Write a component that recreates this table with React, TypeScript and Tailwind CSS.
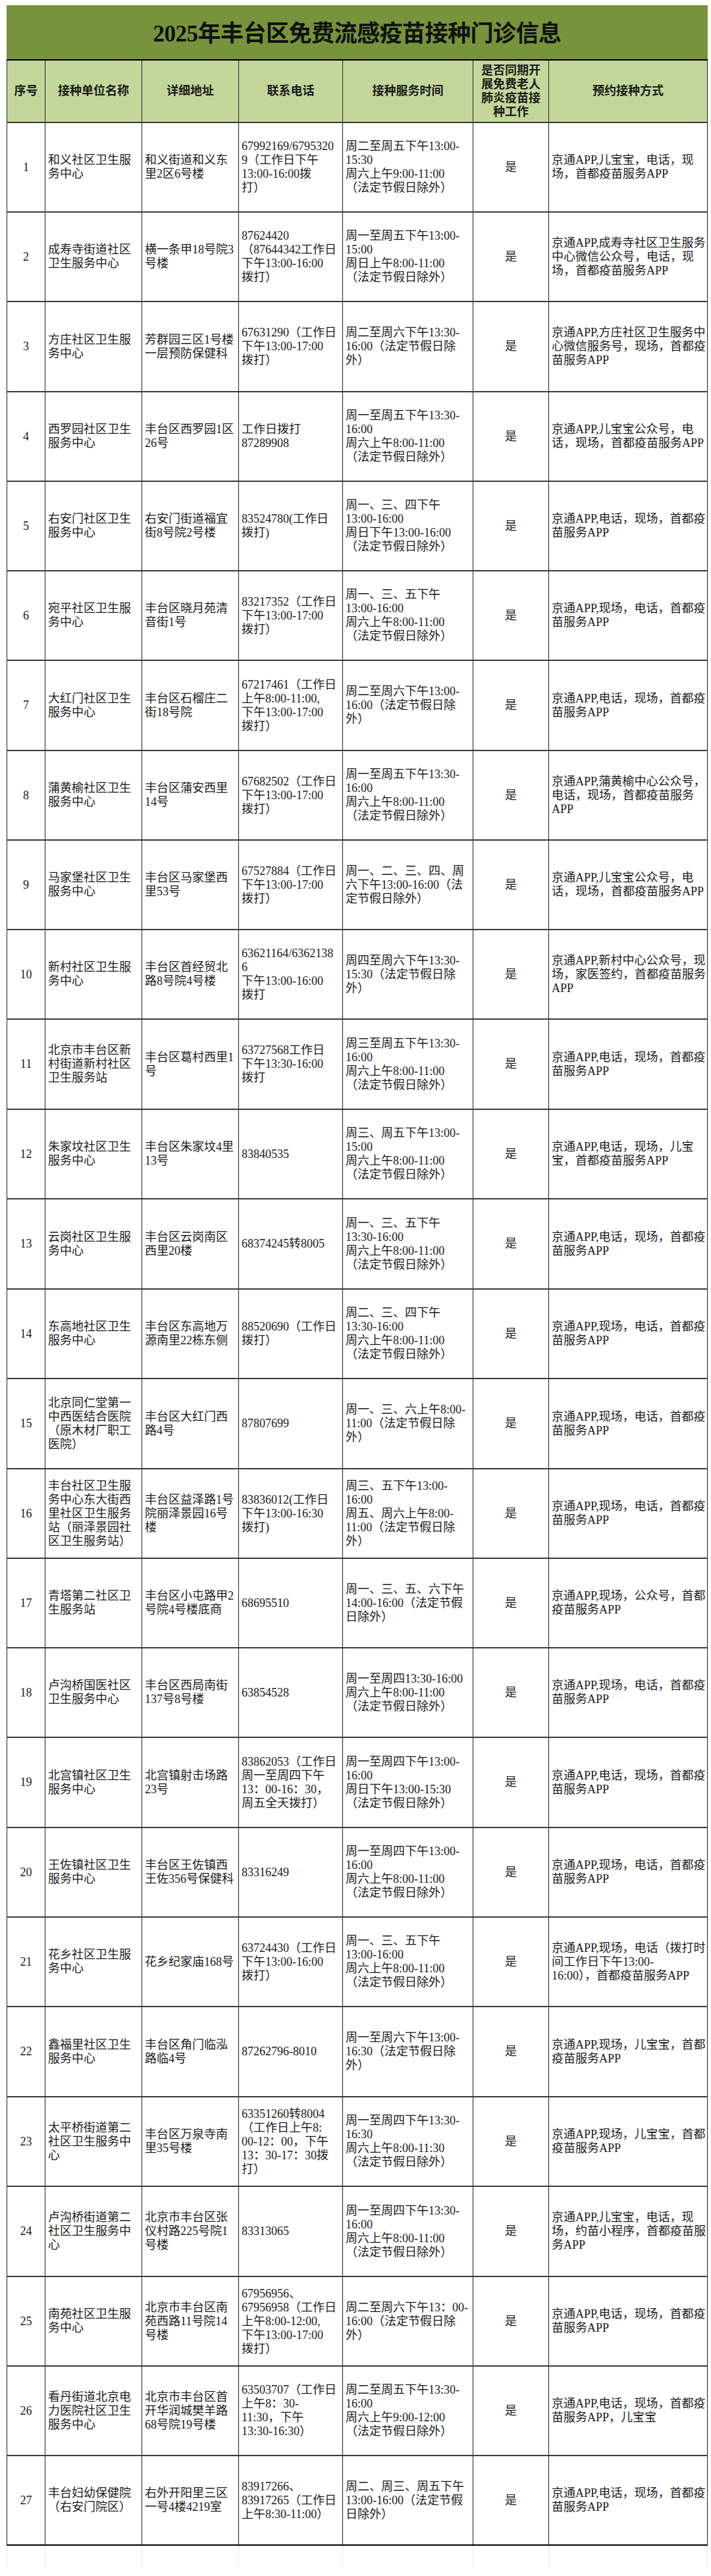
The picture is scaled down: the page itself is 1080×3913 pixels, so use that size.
type Row = {
  name: string;
  addr: string;
  phone: string;
  time: string;
  method: string;
  tall?: boolean;
};

const rows: Row[] = [
  {
    name: "和义社区卫生服\n务中心",
    addr: "和义街道和义东\n里2区6号楼",
    phone: "67992169/6795320\n9（工作日下午\n13:00-16:00拨\n打）",
    time: "周二至周五下午13:00-\n15:30\n周六上午9:00-11:00\n（法定节假日除外）",
    method: "京通APP,儿宝宝，电话，现\n场，首都疫苗服务APP",
  },
  {
    name: "成寿寺街道社区\n卫生服务中心",
    addr: "横一条甲18号院3\n号楼",
    phone: "87624420\n（87644342工作日\n下午13:00-16:00\n拨打）",
    time: "周一至周五下午13:00-\n15:00\n周日上午8:00-11:00\n（法定节假日除外）",
    method: "京通APP,成寿寺社区卫生服务\n中心微信公众号，电话，现\n场，首都疫苗服务APP",
  },
  {
    name: "方庄社区卫生服\n务中心",
    addr: "芳群园三区1号楼\n一层预防保健科",
    phone: "67631290（工作日\n下午13:00-17:00\n拨打）",
    time: "周二至周六下午13:30-\n16:00（法定节假日除\n外）",
    method: "京通APP,方庄社区卫生服务中\n心微信服务号，现场，首都疫\n苗服务APP",
    tall: true,
  },
  {
    name: "西罗园社区卫生\n服务中心",
    addr: "丰台区西罗园1区\n26号",
    phone: "工作日拨打\n87289908",
    time: "周一至周五下午13:30-\n16:00\n周六上午8:00-11:00\n（法定节假日除外）",
    method: "京通APP,儿宝宝公众号，电\n话，现场，首都疫苗服务APP",
  },
  {
    name: "右安门社区卫生\n服务中心",
    addr: "右安门街道福宜\n街8号院2号楼",
    phone: "83524780(工作日\n拨打)",
    time: "周一、三、四下午\n13:00-16:00\n周日下午13:00-16:00\n（法定节假日除外）",
    method: "京通APP,电话，现场，首都疫\n苗服务APP",
  },
  {
    name: "宛平社区卫生服\n务中心",
    addr: "丰台区晓月苑清\n音街1号",
    phone: "83217352（工作日\n下午13:00-17:00\n拨打）",
    time: "周一、三、五下午\n13:00-16:00\n周六上午8:00-11:00\n（法定节假日除外）",
    method: "京通APP,现场，电话，首都疫\n苗服务APP",
  },
  {
    name: "大红门社区卫生\n服务中心",
    addr: "丰台区石榴庄二\n街18号院",
    phone: "67217461（工作日\n上午8:00-11:00,\n下午13:00-17:00\n拨打）",
    time: "周二至周六下午13:00-\n16:00（法定节假日除\n外）",
    method: "京通APP,电话，现场，首都疫\n苗服务APP",
    tall: true,
  },
  {
    name: "蒲黄榆社区卫生\n服务中心",
    addr: "丰台区蒲安西里\n14号",
    phone: "67682502（工作日\n下午13:00-17:00\n拨打）",
    time: "周一至周五下午13:30-\n16:00\n周六上午8:00-11:00\n（法定节假日除外）",
    method: "京通APP,蒲黄榆中心公众号，\n电话，现场，首都疫苗服务\nAPP",
  },
  {
    name: "马家堡社区卫生\n服务中心",
    addr: "丰台区马家堡西\n里53号",
    phone: "67527884（工作日\n下午13:00-17:00\n拨打）",
    time: "周一、二、三、四、周\n六下午13:00-16:00（法\n定节假日除外）",
    method: "京通APP,儿宝宝公众号，电\n话，现场，首都疫苗服务APP",
  },
  {
    name: "新村社区卫生服\n务中心",
    addr: "丰台区首经贸北\n路8号院4号楼",
    phone: "63621164/6362138\n6\n下午13:00-16:00\n拨打",
    time: "周四至周六下午13:30-\n15:30（法定节假日除\n外）",
    method: "京通APP,新村中心公众号，现\n场，家医签约，首都疫苗服务\nAPP",
  },
  {
    name: "北京市丰台区新\n村街道新村社区\n卫生服务站",
    addr: "丰台区葛村西里1\n号",
    phone: "63727568工作日\n下午13:30-16:00\n拨打",
    time: "周三至周五下午13:30-\n16:00\n周六上午8:00-11:00\n（法定节假日除外）",
    method: "京通APP,电话，现场，首都疫\n苗服务APP",
    tall: true,
  },
  {
    name: "朱家坟社区卫生\n服务中心",
    addr: "丰台区朱家坟4里\n13号",
    phone: "83840535",
    time: "周三、周五下午13:00-\n15:00\n周六上午8:00-11:00\n（法定节假日除外）",
    method: "京通APP,电话，现场，儿宝\n宝，首都疫苗服务APP",
  },
  {
    name: "云岗社区卫生服\n务中心",
    addr: "丰台区云岗南区\n西里20楼",
    phone: "68374245转8005",
    time: "周一、三、五下午\n13:30-16:00\n周六上午8:00-11:00\n（法定节假日除外）",
    method: "京通APP,电话，现场，首都疫\n苗服务APP",
    tall: true,
  },
  {
    name: "东高地社区卫生\n服务中心",
    addr: "丰台区东高地万\n源南里22栋东侧",
    phone: "88520690（工作日\n拨打）",
    time: "周二、三、四下午\n13:30-16:00\n周六上午8:00-11:00\n（法定节假日除外）",
    method: "京通APP,现场，电话，首都疫\n苗服务APP",
  },
  {
    name: "北京同仁堂第一\n中西医结合医院\n（原木材厂职工\n医院）",
    addr: "丰台区大红门西\n路4号",
    phone: "87807699",
    time: "周一、三、六上午8:00-\n11:00（法定节假日除\n外）",
    method: "京通APP,现场，电话，首都疫\n苗服务APP",
    tall: true,
  },
  {
    name: "丰台社区卫生服\n务中心东大街西\n里社区卫生服务\n站（丽泽景园社\n区卫生服务站）",
    addr: "丰台区益泽路1号\n院丽泽景园16号\n楼",
    phone: "83836012(工作日\n下午13:00-16:30\n拨打)",
    time: "周三、五下午13:00-\n16:00\n周五、周六上午8:00-\n11:00（法定节假日除\n外）",
    method: "京通APP,现场，电话，首都疫\n苗服务APP",
  },
  {
    name: "青塔第二社区卫\n生服务站",
    addr: "丰台区小屯路甲2\n号院4号楼底商",
    phone: "68695510",
    time: "周一、三、五、六下午\n14:00-16:00（法定节假\n日除外）",
    method: "京通APP,现场，公众号，首都\n疫苗服务APP",
  },
  {
    name: "卢沟桥国医社区\n卫生服务中心",
    addr: "丰台区西局南街\n137号8号楼",
    phone: "63854528",
    time: "周一至周四13:30-16:00\n周六上午8:00-11:00\n（法定节假日除外）",
    method: "京通APP,现场，电话，首都疫\n苗服务APP",
  },
  {
    name: "北宫镇社区卫生\n服务中心",
    addr: "北宫镇射击场路\n23号",
    phone: "83862053（工作日\n周一至周四下午\n13：00-16：30，\n周五全天拨打）",
    time: "周一至周四下午13:00-\n16:00\n周日下午13:00-15:30\n（法定节假日除外）",
    method: "京通APP,电话，现场，首都疫\n苗服务APP",
    tall: true,
  },
  {
    name: "王佐镇社区卫生\n服务中心",
    addr: "丰台区王佐镇西\n王佐356号保健科",
    phone: "83316249",
    time: "周一至周四下午13:00-\n16:00\n周六上午8:00-11:00\n（法定节假日除外）",
    method: "京通APP,现场，电话，首都疫\n苗服务APP",
  },
  {
    name: "花乡社区卫生服\n务中心",
    addr: "花乡纪家庙168号",
    phone: "63724430（工作日\n下午13:00-16:00\n拨打）",
    time: "周一、三、五下午\n13:00-16:00\n周六上午8:00-11:00\n（法定节假日除外）",
    method: "京通APP,现场，电话（拨打时\n间工作日下午13:00-\n16:00），首都疫苗服务APP",
  },
  {
    name: "鑫福里社区卫生\n服务中心",
    addr: "丰台区角门临泓\n路临4号",
    phone: "87262796-8010",
    time: "周一至周六下午13:00-\n16:30（法定节假日除\n外）",
    method: "京通APP,现场，儿宝宝，首都\n疫苗服务APP",
    tall: true,
  },
  {
    name: "太平桥街道第二\n社区卫生服务中\n心",
    addr: "丰台区万泉寺南\n里35号楼",
    phone: "63351260转8004\n（工作日上午8:\n00-12：00，下午\n13：30-17：30拨\n打）",
    time: "周一至周四下午13:30-\n16:30\n周六上午8:00-11:30\n（法定节假日除外）",
    method: "京通APP,现场，儿宝宝，首都\n疫苗服务APP",
  },
  {
    name: "卢沟桥街道第二\n社区卫生服务中\n心",
    addr: "北京市丰台区张\n仪村路225号院1\n号楼",
    phone: "83313065",
    time: "周一至周四下午13:30-\n16:00\n周六上午8:00-11:00\n（法定节假日除外）",
    method: "京通APP,儿宝宝，电话，现\n场，约苗小程序，首都疫苗服\n务APP",
    tall: true,
  },
  {
    name: "南苑社区卫生服\n务中心",
    addr: "北京市丰台区南\n苑西路11号院14\n号楼",
    phone: "67956956、\n67956958（工作日\n上午8:00-12:00,\n下午13:00-17:00\n拨打）",
    time: "周二至周六下午13：00-\n16:00（法定节假日除\n外）",
    method: "京通APP,电话，现场，首都疫\n苗服务APP",
  },
  {
    name: "看丹街道北京电\n力医院社区卫生\n服务中心",
    addr: "北京市丰台区首\n开华润城樊羊路\n68号院19号楼",
    phone: "63503707（工作日\n上午8：30-\n11:30，下午\n13:30-16:30）",
    time: "周二至周五下午13:30-\n16:00\n周六上午9:00-12:00\n（法定节假日除外）",
    method: "京通APP,电话，现场，首都疫\n苗服务APP，儿宝宝",
  },
  {
    name: "丰台妇幼保健院\n（右安门院区）",
    addr: "右外开阳里三区\n一号4楼4219室",
    phone: "83917266、\n83917265（工作日\n上午8:30-11:00）",
    time: "周二、周三、周五下午\n13:00-16:00（法定节假\n日除外）",
    method: "京通APP,电话，现场，首都疫\n苗服务APP",
  },
];

const cols = "grid grid-cols-[59px_147px_147px_158px_198px_115px_241px]";

function Cell({
  children,
  center,
  first,
}: {
  children: React.ReactNode;
  center?: boolean;
  first?: boolean;
}) {
  return (
    <div
      className={
        "flex items-center overflow-hidden border-r border-[#1f1f1f] " +
        (center ? "justify-center " : "pl-[4px] ") +
        (first ? "border-l" : "")
      }
    >
      <div className="whitespace-pre leading-[21px]">{children}</div>
    </div>
  );
}

export default function App() {
  return (
    <div className="w-[1080px] min-h-[3913px] bg-white pt-[8px] pl-[10px] text-[18px] text-[#1a1a1a] font-['Liberation_Serif','Noto_Sans_CJK_SC',serif]">
      <div className="w-[1065px]">
        {/* 标题 */}
        <div className="flex h-[84px] items-center justify-center border-b-2 border-black bg-[#77933c] pt-[6px]">
          <h1 className="text-[35px] font-bold tracking-[-0.5px] text-[#111]">
            2025年丰台区免费流感疫苗接种门诊信息
          </h1>
        </div>

        {/* 表头 */}
        <div className={cols + " h-[95px] border-b-2 border-[#3a3a3a] bg-[#c4d79b] font-bold"}>
          <Cell center first>序号</Cell>
          <Cell center>接种单位名称</Cell>
          <Cell center>详细地址</Cell>
          <Cell center>联系电话</Cell>
          <Cell center>接种服务时间</Cell>
          <Cell center>
            <div className="text-center">{"是否同期开\n展免费老人\n肺炎疫苗接\n种工作"}</div>
          </Cell>
          <Cell center>预约接种方式</Cell>
        </div>

        {/* 数据行 */}
        {rows.map((r, i) => (
          <div
            key={i}
            className={
              cols +
              " border-b-2 " +
              (i === rows.length - 1 ? "border-black " : "border-[#3a3a3a] ") +
              (r.tall ? "h-[137px]" : "h-[136px]")
            }
          >
            <Cell center first>{i + 1}</Cell>
            <Cell>{r.name}</Cell>
            <Cell>{r.addr}</Cell>
            <Cell>{r.phone}</Cell>
            <Cell>{r.time}</Cell>
            <Cell center>是</Cell>
            <Cell>{r.method}</Cell>
          </div>
        ))}

        {/* 表格下方的浅色网格线 */}
        <div className={cols + " h-[34px]"}>
          <div className="border-l border-r border-[#e8e8e8]" />
          <div className="border-r border-[#e8e8e8]" />
          <div className="border-r border-[#e8e8e8]" />
          <div className="border-r border-[#e8e8e8]" />
          <div className="border-r border-[#e8e8e8]" />
          <div className="border-r border-[#e8e8e8]" />
          <div className="border-r border-[#e8e8e8]" />
        </div>
      </div>
    </div>
  );
}
